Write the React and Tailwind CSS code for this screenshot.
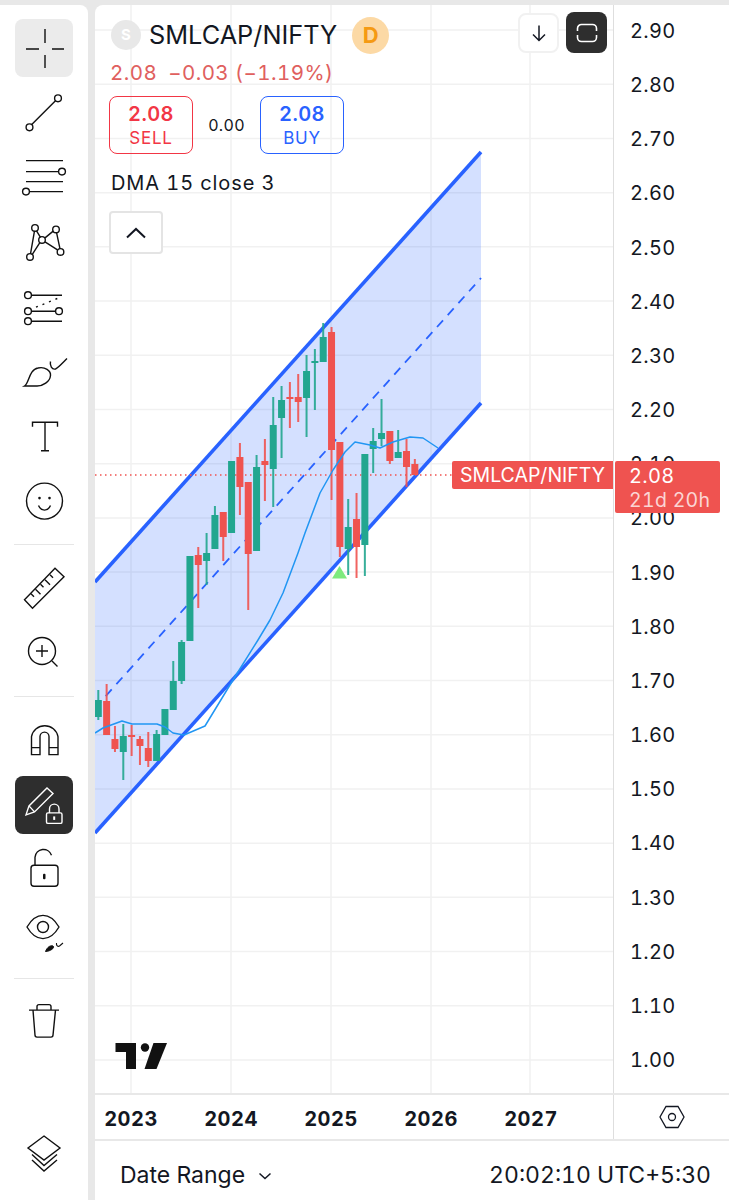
const G = '#22a68f'
const R = '#ef5350'

// [bodyTop, bodyBottom, wickTop, wickBottom, colour], one per month
const candles = [
  [700, 717, 690, 720, G], [701, 735, 684, 735, R], [739, 749, 726, 752, R], [736, 752, 724, 780, G],
  [735, 737, 725, 756, R], [739, 746, 736, 765, R], [748, 761, 732, 767, R], [734, 761, 730, 761, G],
  [709, 735, 709, 735, G], [681, 710, 661, 710, G], [642, 681, 640, 684, G], [556, 641, 556, 641, G],
  [555, 565, 547, 608, R], [553, 561, 533, 585, G], [515, 549, 506, 549, G], [512, 537, 512, 561, R],
  [461, 533, 461, 533, G], [457, 487, 443, 515, R], [482, 554, 482, 610, R], [467, 551, 455, 551, G],
  [461, 465, 439, 501, R], [425, 469, 397, 507, G], [400, 418, 386, 458, G], [397, 399, 382, 428, R],
  [397, 402, 374, 422, R], [371, 398, 355, 437, G], [361, 363, 349, 410, G], [337, 362, 323, 362, G],
  [332, 450, 327, 500, R], [442, 547, 442, 557, R], [527, 549, 499, 575, G], [519, 547, 493, 578, R],
  [454, 545, 454, 576, G], [441, 449, 428, 473, G], [433, 439, 399, 446, G], [431, 461, 431, 464, R],
  [452, 458, 430, 458, G], [451, 467, 439, 487, R], [464, 475, 459, 475, R],
]

const maLine = '95,733 103,728 122,721 132,724 157,724 165,727 173,733 184,735 205,726 233,680 258,640 270,620 283,593 298,553 305,533 320,493 333,470 345,452 355,442 370,445 380,448 393,442 410,437 423,438 438,448'
const prices = ['2.90', '2.80', '2.70', '2.60', '2.50', '2.40', '2.30', '2.20', '2.10', '2.00', '1.90', '1.80', '1.70', '1.60', '1.50', '1.40', '1.30', '1.20', '1.10', '1.00']
const years = ['2023', '2024', '2025', '2026', '2027']

function ToolIcon({ cy, active, hover, children }) {
  return (
    <div className={`w-[58px] h-[58px] shrink-0 rounded-lg ${active ? 'bg-[#2e2e2e] text-white' : hover ? 'bg-[#ebebeb] text-[#111]' : 'text-[#111]'}`}>
      <svg width="58" height="58" viewBox={`15 ${cy - 29} 58 58`} fill="none" stroke="currentColor" strokeWidth="1.4">
        {children}
      </svg>
    </div>
  )
}

function Sep() {
  return (
    <div className="h-[16px] w-full shrink-0 flex items-center px-[14px]">
      <div className="h-[1px] w-full bg-[#e6e6e6]"></div>
    </div>
  )
}

function Sidebar() {
  return (
    <div className="w-[88px] shrink-0 bg-white rounded-tr-lg flex flex-col items-center gap-[6.7px] pt-[14px] pb-[18px]">
      <ToolIcon cy={48} hover>
        <path d="M45 29V43M45 55V68M26 49H39M52 49H64" />
      </ToolIcon>
      <ToolIcon cy={112.7}>
        <path d="M31.5 124.5L55.5 100.5" />
        <circle cx="58" cy="98" r="3.4" />
        <circle cx="29.5" cy="127" r="3.4" />
      </ToolIcon>
      <ToolIcon cy={177.4}>
        <path d="M26 161H63M26 172H58.5M26 182H63M29.5 192H63" />
        <circle cx="62" cy="172" r="3.4" />
        <circle cx="26" cy="192" r="3.4" />
      </ToolIcon>
      <ToolIcon cy={242.1}>
        <path d="M30.5 254L34.5 231M36.5 231L40.5 237.5M32 255L40 242.5M45 238L53.5 231M56.5 232.5L60 249M45 242L57.5 250" />
        <circle cx="35" cy="228" r="3.3" />
        <circle cx="56" cy="229.5" r="3.3" />
        <circle cx="42" cy="240" r="3.3" />
        <circle cx="60.5" cy="252" r="3.3" />
        <circle cx="30" cy="257" r="3.3" />
      </ToolIcon>
      <ToolIcon cy={306.8}>
        <path d="M31.5 295H62M31.5 311H55.5M31.5 321H62" />
        <path d="M36 307L58 298" strokeDasharray="2 5" />
        <circle cx="28" cy="295" r="3.4" />
        <circle cx="28" cy="311" r="3.4" />
        <circle cx="59" cy="311" r="3.4" />
        <circle cx="28" cy="321" r="3.4" />
      </ToolIcon>
      <ToolIcon cy={371.5}>
        <path d="M24.5 386.5C29 384 29 370 38 368.5C45 367 51 371 50.5 376C50 382 43 387 36 386.5Z" />
        <path d="M50.5 362C49.5 366 52 370.5 55.5 369.5C58 368.5 63 363 67 359" />
      </ToolIcon>
      <ToolIcon cy={436.2}>
        <path d="M32.5 427V422.5H57.5V427M45 422.5V451M41 451H49" />
      </ToolIcon>
      <ToolIcon cy={500.9}>
        <circle cx="44.5" cy="501" r="18" />
        <circle cx="39.5" cy="498" r="1.3" fill="currentColor" stroke="none" />
        <circle cx="49.5" cy="498" r="1.3" fill="currentColor" stroke="none" />
        <path d="M38.5 505.5C41 511.5 48 511.5 50.5 505.5" />
      </ToolIcon>
      <Sep />
      <ToolIcon cy={588.3}>
        <path d="M24.5 600L55 568.5L64 577L32.5 608.5Z" />
        <path d="M31 594L34 597M35.5 589.5L40.5 594.5M40.5 584.5L43.5 587.5M45 580L50 585M50 575L53 578" />
      </ToolIcon>
      <ToolIcon cy={653}>
        <circle cx="42" cy="651" r="13.5" />
        <path d="M42 645V657M36 651H48M52 661L57.5 666.5" />
      </ToolIcon>
      <Sep />
      <ToolIcon cy={740.4}>
        <path d="M31.5 755V737A13.5 13.5 0 0 1 58 737V755H49V737A4.5 4.5 0 0 0 40 737V755ZM31.5 748H40M49 748H58" />
      </ToolIcon>
      <ToolIcon cy={805.1} active>
        <path d="M26 815L29 806L47 788L53 793.5L34.5 812ZM29 806L34.5 812" />
        <rect x="46.5" y="813" width="15.5" height="10.5" rx="1.5" />
        <path d="M49.5 813V809A4.7 4.7 0 0 1 59 809V813" />
        <rect x="53.2" y="816.5" width="2" height="3.5" fill="currentColor" stroke="none" />
      </ToolIcon>
      <ToolIcon cy={869.8}>
        <rect x="31" y="865" width="27" height="21" rx="3" />
        <path d="M35 865V857A8.5 8.5 0 0 1 51.5 855" />
        <rect x="43" y="873.5" width="2.5" height="5.5" rx="1" fill="currentColor" stroke="none" />
      </ToolIcon>
      <ToolIcon cy={934.5}>
        <path d="M27 927.5C36 912 50 912 59 927.5C50 943 36 943 27 927.5Z" />
        <circle cx="43" cy="927.5" r="5.5" />
        <path d="M45.5 952C47 948 50 945.5 53 946.5C55 947.5 52 951.5 45.5 952Z" fill="currentColor" strokeWidth="1" />
        <path d="M56.5 943.5C56 946 58 947.5 59.5 946.5L63 943.5" strokeWidth="1.1" />
      </ToolIcon>
      <Sep />
      <ToolIcon cy={1021.9}>
        <path d="M29 1010H59M33 1010L35 1035A2 2 0 0 0 37 1037H51A2 2 0 0 0 53 1035L55.5 1010M37 1009.5V1006.5A2 2 0 0 1 39 1004.5H49A2 2 0 0 1 51 1006.5V1009.5" />
      </ToolIcon>
      <div className="mt-auto">
        <ToolIcon cy={1153}>
          <path d="M44 1136L60 1148L44 1160L28 1148Z" />
          <path d="M32 1154.5L44 1165.5L57 1154.5M32 1160L44 1171L57 1160" />
        </ToolIcon>
      </div>
    </div>
  )
}

function ChartDrawing() {
  return (
    <svg className="block" width="518" height="1088" viewBox="95 5 518 1088">
      {prices.map((p, i) => (
        <line key={p} x1="95" x2="613" y1={30 + i * 54.21} y2={30 + i * 54.21} stroke="#f1f1f1" strokeWidth="1.5" />
      ))}
      {[131, 231, 331, 431, 530].map(x => (
        <line key={x} x1={x} x2={x} y1="5" y2="1093" stroke="#f1f1f1" strokeWidth="1.5" />
      ))}

      <polygon points="95,582 481,152 481,403 95,833" fill="#2962ff" fillOpacity="0.2" />
      <line x1="95" y1="708" x2="481" y2="278" stroke="#2962ff" strokeWidth="1.8" strokeDasharray="9 7" />
      <line x1="95" y1="582" x2="481" y2="152" stroke="#2962ff" strokeWidth="3.6" />
      <line x1="95" y1="833" x2="481" y2="403" stroke="#2962ff" strokeWidth="3.6" />

      <line x1="95" y1="475" x2="452" y2="475" stroke={R} strokeWidth="1.3" strokeDasharray="1.5 3.5" />

      {candles.map((c, i) => {
        const x = 98.3 + i * 8.33
        return (
          <g key={i}>
            <rect x={x - 1} y={c[2]} width="2" height={c[3] - c[2]} fill={c[4]} fillOpacity="0.9" />
            <rect x={x - 3.5} y={c[0]} width="7" height={c[1] - c[0]} fill={c[4]} />
          </g>
        )
      })}

      <polyline points={maLine} fill="none" stroke="#2196f3" strokeWidth="1.5" strokeLinejoin="round" />
      <polygon points="332,578.5 339.5,566 347,578.5" fill="#7eea7e" />

      {/* logo */}
      <path d="M115.5 1043H136V1069H126V1052H115.5Z" fill="#111" />
      <circle cx="145" cy="1047.5" r="4.2" fill="#111" />
      <path d="M153.5 1043H167L156.5 1069H144.5Z" fill="#111" />
    </svg>
  )
}

function Legend() {
  return (
    <div className="absolute left-[14px] top-[10px] flex flex-col items-start text-[#131722]">
      <div className="h-[40px] flex items-center">
        <div className="w-[30px] h-[30px] ml-[2px] rounded-full bg-[#e8e8e8] text-white text-[15px] font-bold flex items-center justify-center">S</div>
        <div className="ml-[8px] text-[25.3px] leading-[40px]">SMLCAP/NIFTY</div>
        <div className="ml-[15px] w-[37px] h-[37px] rounded-full bg-[#fcd9a5] text-[#f59a13] text-[22px] font-bold flex items-center justify-center">D</div>
      </div>
      <div className="mt-[4px] h-[28px] ml-[1px] flex items-center gap-[11px] text-[20.5px] leading-[28px] tracking-[0.45px] text-[#e0605e]">
        <span>2.08</span>
        <span>−0.03 (−1.19%)</span>
      </div>
      <div className="mt-[9px] flex items-center">
        <div className="w-[84px] h-[58px] rounded-lg border-[1.5px] border-[#f23645] text-[#f23645] flex flex-col items-center justify-center">
          <div className="text-[20px] leading-[26px] font-semibold tracking-[0.4px]">2.08</div>
          <div className="text-[17px] leading-[22px] tracking-[0.8px]">SELL</div>
        </div>
        <div className="w-[67px] text-center text-[16px] tracking-[0.3px]">0.00</div>
        <div className="w-[84px] h-[58px] rounded-lg border-[1.5px] border-[#2962ff] text-[#2962ff] flex flex-col items-center justify-center">
          <div className="text-[20px] leading-[26px] font-semibold tracking-[0.4px]">2.08</div>
          <div className="text-[17px] leading-[22px] tracking-[0.8px]">BUY</div>
        </div>
      </div>
      <div className="mt-[15px] ml-[2px] h-[28px] text-[20px] leading-[28px] tracking-[0.9px] whitespace-nowrap">DMA 15 close 3</div>
      <div className="mt-[14px] w-[54px] h-[43px] rounded-[4px] border-2 border-[#e4e4e4] bg-white flex items-center justify-center">
        <svg width="22" height="12" viewBox="0 0 22 12" fill="none" stroke="#131722" strokeWidth="2"><path d="M2 10.5L11 2L20 10.5" /></svg>
      </div>
    </div>
  )
}

function ChartButtons() {
  return (
    <div className="absolute right-[6px] top-[7px] flex items-center gap-[7px]">
      <div className="w-[41px] h-[40px] rounded-lg border-2 border-[#f1f1f1] bg-white flex items-center justify-center">
        <svg width="18" height="18" viewBox="0 0 18 18" fill="none" stroke="#131722" strokeWidth="1.5"><path d="M9 1.5V16.5M3 10.5L9 16.5L15 10.5" /></svg>
      </div>
      <div className="w-[41px] h-[41px] rounded-lg bg-[#2e2e2e] flex items-center justify-center">
        <svg width="22" height="20" viewBox="0 0 22 20" fill="none" stroke="#fff" strokeWidth="1.6"><path d="M1.5 8V5.5A4 4 0 0 1 5.5 1.5H16.5A4 4 0 0 1 20.5 5.5V8M1.5 12V14.5A4 4 0 0 0 5.5 18.5H16.5A4 4 0 0 0 20.5 14.5V12" /></svg>
      </div>
    </div>
  )
}

export default function App() {
  return (
    <div className="w-[729px] h-[1200px] bg-[#e8e8e8] flex pt-[5px] overflow-hidden tabular-nums [font-family:Inter,'Liberation_Sans',sans-serif]">
      <Sidebar />

      <div className="ml-[7px] flex-1 bg-white rounded-tl-lg flex flex-col overflow-hidden">
        <div className="h-[1088px] flex">
          <div className="relative w-[518px]">
            <ChartDrawing />
            <Legend />
            <ChartButtons />
            <div className="absolute left-[357px] top-[456px] w-[161px] h-[28px] rounded-l-[2px] bg-[#ef5350] text-white text-[19.5px] leading-[28px] pl-[8px] whitespace-nowrap">SMLCAP/NIFTY</div>
          </div>

          <div className="relative w-[116px] border-l border-[#dedede] pl-[16px] pt-[14px] pb-[21px] flex flex-col justify-between text-[20px] leading-[24px] tracking-[0.3px] text-[#131722]">
            {prices.map(p => <div key={p}>{p}</div>)}
            <div className="absolute left-[1px] top-[456px] w-[105px] h-[52px] rounded-[2px] bg-[#ef5350] pl-[14px] pt-[3px] text-white">
              <div className="text-[20px] leading-[24px]">2.08</div>
              <div className="text-[19.5px] leading-[24px] text-[#fbd5d4] whitespace-nowrap">21d 20h</div>
            </div>
          </div>
        </div>

        <div className="h-[48px] flex border-t-2 border-b-2 border-[#e8e8e8]">
          <div className="w-[518px] flex gap-[28px] items-center pt-[3px]">
            {years.map(y => (
              <div key={y} className="w-[72px] text-center text-[20px] font-bold tracking-[0.5px] text-[#131722]">{y}</div>
            ))}
          </div>
          <div className="flex-1 border-l border-[#dedede] flex items-center pl-[45px]">
            <svg width="26" height="24" viewBox="0 0 26 24" fill="none" stroke="#131722" strokeWidth="1.3">
              <path d="M7 1.5H19L25 12L19 22.5H7L1 12Z" />
              <circle cx="13" cy="12" r="3.5" />
            </svg>
          </div>
        </div>

        <div className="flex-1 flex items-center justify-between pl-[25px] pr-[18px] pt-[10px] text-[23px] text-[#131722]">
          <div className="flex items-center gap-[13px]">
            <span>Date Range</span>
            <svg width="14" height="8" viewBox="0 0 14 8" fill="none" stroke="#131722" strokeWidth="1.5"><path d="M1.5 1.5L7 6.5L12.5 1.5" /></svg>
          </div>
          <div>20:02:10 UTC+5:30</div>
        </div>
      </div>
    </div>
  )
}
